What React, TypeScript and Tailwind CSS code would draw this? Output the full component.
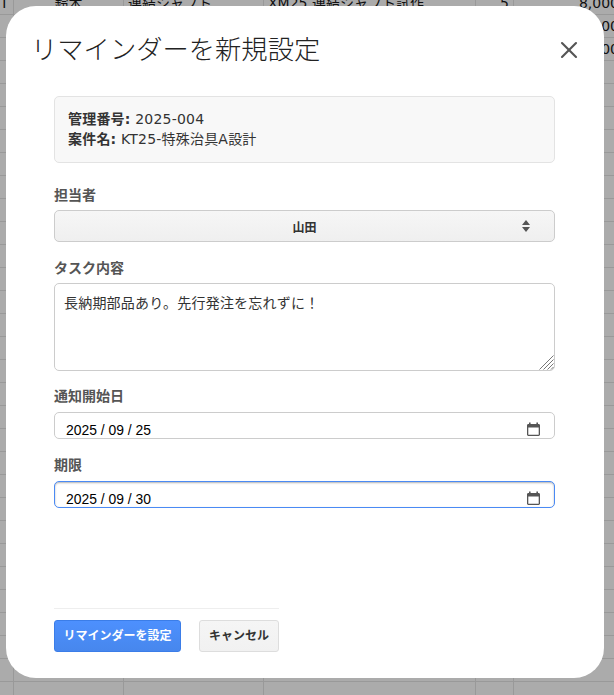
import { X } from "lucide-react";

const cols = ["w-[14px]", "w-[110px]", "w-[140px]", "w-[212px]", "w-[38px]", "w-[110px]"];
const aligns = ["", "text-center", "", "", "text-right", "text-right"];

const rows = [
  ["T", "鈴木", "連結シャフト", "XM25 連結シャフト試作", "5", "8,000"],
  ["", "", "", "", "", "8,000"],
  ["", "", "", "", "", "8,000"],
];

function Sheet() {
  const blank = Array.from({ length: 28 }, () => ["", "", "", "", "", ""]);
  return (
    <div className="-mt-[8px] h-[703px] overflow-hidden bg-[#ababab] text-[14px] text-[#111] font-['DejaVu_Sans','Noto_Sans_CJK_JP',sans-serif]">
      {[...rows, ...blank].map((row, i) => (
        <div key={i} className="flex h-[23px] border-b border-[#999]">
          {row.map((cell, j) => (
            <div key={j} className={`${cols[j]} ${aligns[j]} ${j === 0 ? "pl-0" : "px-[4px]"} shrink-0 border-r border-[#999] whitespace-nowrap leading-[22px]`}>
              {cell}
            </div>
          ))}
        </div>
      ))}
    </div>
  );
}

function Label({ children }: { children: string }) {
  return <label className="block text-[14px] leading-[20px] font-bold text-[#555]">{children}</label>;
}

function CalendarIcon() {
  return (
    <svg width="15" height="15" viewBox="0 0 15 15" className="text-[#555]">
      <path fill="currentColor" fillRule="evenodd" d="M3 0.5h1.6v1.5h5.8V0.5H12v1.5h0.6c0.8 0 1.4 0.6 1.4 1.4v9.2c0 0.8-0.6 1.4-1.4 1.4H2.4c-0.8 0-1.4-0.6-1.4-1.4V3.4C1 2.6 1.6 2 2.4 2H3V0.5z M2.3 5.4v7.1c0 0.2 0.1 0.3 0.3 0.3h9.8c0.2 0 0.3-0.1 0.3-0.3V5.4H2.3z" />
    </svg>
  );
}

function SelectArrows() {
  return (
    <svg width="8" height="12" viewBox="0 0 8 12" className="absolute right-[24px] top-[9px] text-[#555]">
      <path fill="currentColor" d="M4 0L8 5H0z M0 7h8L4 12z" />
    </svg>
  );
}

function ResizeHandle() {
  return (
    <svg width="15" height="15" viewBox="0 0 15 15" className="absolute bottom-[1px] right-[1px] text-[#777]">
      <path stroke="currentColor" strokeWidth="1" fill="none" d="M0.5 14.5L14.5 0.5 M4.5 14.5L14.5 4.5 M8.5 14.5L14.5 8.5 M12 14.5L14.5 12" />
    </svg>
  );
}

function DateField({ value, focused }: { value: string; focused?: boolean }) {
  return (
    <div className={`flex h-[27px] items-end overflow-hidden rounded-[5px] border pl-[11px] pr-[13px] ${focused ? "border-[#4a8af4] shadow-[inset_0_1px_2px_rgba(0,0,0,0.3)]" : "border-[#ccc]"}`}>
      <span className="flex-1 text-[13.9px] leading-[16px] text-black font-['Liberation_Sans',sans-serif]">{value}</span>
      <span className="mb-[1px]"><CalendarIcon /></span>
    </div>
  );
}

export default function App() {
  return (
    <div className="relative h-[695px] w-[614px] overflow-hidden font-['Liberation_Sans','Noto_Sans_CJK_JP',sans-serif]">
      <Sheet />
      <div className="absolute left-[6px] top-[6px] flex h-[672px] w-[598px] flex-col rounded-[30px] bg-white">
        <div className="flex items-start justify-between pl-[25px] pr-[21px] pt-[26px]">
          <h1 className="text-[26.3px] leading-[36px] font-light text-[#222]">リマインダーを新規設定</h1>
          <button className="mt-[4px] text-[#555]" aria-label="閉じる">
            <X size={28} strokeWidth={1.8} />
          </button>
        </div>

        <div className="ml-[48px] mt-[28px] w-[501px]">
          <div className="rounded-[5px] border border-[#e3e3e3] bg-[#f8f8f8] px-[13px] pt-[12px] pb-[13px] text-[14px] leading-[20px] tracking-[0.2px] text-[#333] font-['DejaVu_Sans','Noto_Sans_CJK_JP',sans-serif]">
            <p><strong>管理番号:</strong> 2025-004</p>
            <p><strong>案件名:</strong> KT25-特殊治具A設計</p>
          </div>

          <div className="mt-[22px]"><Label>担当者</Label></div>
          <div className="relative mt-[5px] flex h-[32px] items-center justify-center rounded-[5px] border border-[#ccc] bg-gradient-to-b from-[#f6f6f6] to-[#efefef] pt-[3px] text-[12px] font-bold text-[#333]">
            山田
            <SelectArrows />
          </div>

          <div className="mt-[16px]"><Label>タスク内容</Label></div>
          <div className="relative mt-[5px]">
            <textarea
              readOnly
              className="block h-[88px] w-full resize-none rounded-[5px] border border-[#ccc] px-[9px] py-[9px] text-[14px] leading-[20px] tracking-[0.2px] text-[#333] outline-none"
              defaultValue="長納期部品あり。先行発注を忘れずに！"
            />
            <ResizeHandle />
          </div>

          <div className="mt-[15px]"><Label>通知開始日</Label></div>
          <div className="mt-[6px]"><DateField value="2025 / 09 / 25" /></div>

          <div className="mt-[16px]"><Label>期限</Label></div>
          <div className="mt-[6px]"><DateField value="2025 / 09 / 30" focused /></div>
        </div>

        <div className="mx-[48px] mt-auto mb-[26px] w-[225px]">
          <div className="flex justify-between border-t border-[#eee] pt-[11px]">
            <button className="h-[32px] w-[127px] rounded-[3px] border border-[#3b7de8] bg-gradient-to-b from-[#4d90fe] to-[#4787ed] text-[12px] font-bold text-white">リマインダーを設定</button>
            <button className="h-[32px] w-[80px] rounded-[3px] border border-[#ddd] bg-gradient-to-b from-[#f5f5f5] to-[#f1f1f1] text-[12px] font-bold text-[#333]">キャンセル</button>
          </div>
        </div>
      </div>
    </div>
  );
}
